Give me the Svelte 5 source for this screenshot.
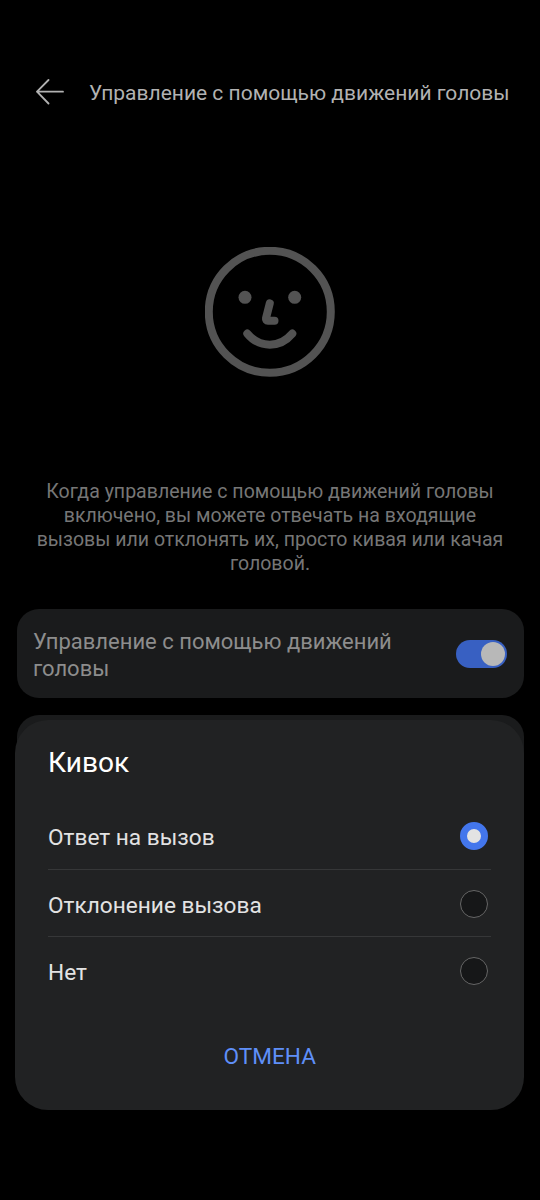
<script lang="ts">
    let enabled = $state(true);
    let isOpen = $state(true);
    let selected = $state("answer");

    const options = [
        { id: "answer", label: "Ответ на вызов" },
        { id: "decline", label: "Отклонение вызова" },
        { id: "none", label: "Нет" },
    ];

    function closeDialog() {
        isOpen = false;
    }
</script>

<div class="screen">
    <header class="app-bar">
        <button class="back-btn" aria-label="Назад">
            <svg
                viewBox="0 0 28 26"
                width="28"
                height="26"
                fill="none"
                stroke="currentColor"
                stroke-width="1.8"
                stroke-linecap="round"
                stroke-linejoin="round"
            >
                <path d="M12.5 1 L1 12.7 L12.5 24.5 M1 12.7 H27" />
            </svg>
        </button>
        <h1>Управление с помощью движений головы</h1>
    </header>

    <div class="illustration">
        <svg
            viewBox="0 0 130 130"
            width="130"
            height="130"
            fill="none"
            stroke="currentColor"
            stroke-width="8"
            stroke-linecap="round"
            stroke-linejoin="round"
        >
            <circle cx="64.8" cy="64.8" r="61" />
            <circle cx="40" cy="50.3" r="6.5" fill="currentColor" stroke="none" />
            <circle cx="89.7" cy="50.3" r="6.5" fill="currentColor" stroke="none" />
            <path d="M64.8 56.3 L61 71.2 Q60.6 73.8 63 73.8 H69.5" />
            <path d="M42.3 86.6 C54.5 101.3 75 101.3 87.3 86.6" />
        </svg>
    </div>

    <p class="description">
        Когда управление с помощью движений головы включено, вы можете отвечать
        на входящие вызовы или отклонять их, просто кивая или качая головой.
    </p>

    <section class="card">
        <span class="card-label">Управление с помощью движений головы</span>
        <button
            class="switch"
            class:on={enabled}
            role="switch"
            aria-checked={enabled}
            aria-label="Управление"
            onclick={() => (enabled = !enabled)}
        >
            <span class="thumb"></span>
        </button>
    </section>

    <section class="card next-card"></section>
</div>

{#if isOpen}
    <div class="dialog" role="dialog" aria-modal="true" aria-labelledby="dialog-title">
        <h2 id="dialog-title">Кивок</h2>
        <div class="options" role="radiogroup">
            {#each options as option (option.id)}
                <button
                    class="option"
                    role="radio"
                    aria-checked={selected === option.id}
                    onclick={() => (selected = option.id)}
                >
                    <span class="option-label">{option.label}</span>
                    <span class="radio" class:checked={selected === option.id}></span>
                </button>
            {/each}
        </div>
        <button class="cancel-btn" onclick={closeDialog}>ОТМЕНА</button>
    </div>
{/if}

<style>
    :global(body) {
        background: #000;
        font-family: Roboto, sans-serif;
    }

    button {
        padding: 0;
        border: none;
        background: none;
        color: inherit;
        font: inherit;
        cursor: pointer;
    }

    .screen {
        box-sizing: border-box;
        height: 1200px;
        padding: 62px 16.5px 0;
        overflow: hidden;
        background: #000;
    }

    .app-bar {
        display: flex;
        align-items: center;
        height: 60px;
        padding-left: 19.5px;
        color: #b2b2b2;
    }

    .back-btn {
        display: flex;
        margin-right: 25px;
    }

    h1 {
        margin: 0;
        padding-top: 1px;
        font-size: 21px;
        font-weight: 400;
        white-space: nowrap;
    }

    .illustration {
        display: flex;
        justify-content: center;
        margin-top: 125px;
        color: #535353;
    }

    .description {
        margin: 103px 16px 0;
        font-size: 19.55px;
        line-height: 24px;
        text-align: center;
        color: #767676;
    }

    .card {
        box-sizing: border-box;
        display: flex;
        align-items: center;
        justify-content: space-between;
        height: 89px;
        margin-top: 33px;
        padding: 0 16.5px;
        border-radius: 22px;
        background: #1a1b1c;
    }

    .card-label {
        width: 380px;
        padding-top: 3px;
        font-size: 22px;
        line-height: 27px;
        color: #8d8d8d;
    }

    .switch {
        box-sizing: border-box;
        display: flex;
        width: 51px;
        height: 28px;
        padding: 2px;
        border-radius: 14px;
        background: #444;
    }

    .switch.on {
        justify-content: flex-end;
        background: #3860c2;
    }

    .thumb {
        width: 24px;
        height: 24px;
        border-radius: 50%;
        background: #b8b8b8;
    }

    .next-card {
        margin-top: 17px;
    }

    .dialog {
        position: fixed;
        left: 15px;
        right: 15.6px;
        bottom: 90px;
        box-sizing: border-box;
        height: 389.6px;
        padding: 25px 33px 0;
        border-radius: 33px;
        background: #212223;
        display: flex;
        flex-direction: column;
    }

    h2 {
        margin: 0;
        font-size: 28.1px;
        font-weight: 400;
        line-height: 36px;
        color: #fff;
    }

    .options {
        margin-top: 20px;
    }

    .option {
        box-sizing: border-box;
        display: flex;
        align-items: center;
        justify-content: space-between;
        width: 100%;
        height: 67.5px;
        padding: 1px 3px 0 0;
        font-size: 22.65px;
        color: #e3e3e3;
    }

    .option + .option {
        border-top: 1px solid #363738;
    }

    .option-label {
        padding-top: 3px;
    }

    .radio {
        box-sizing: border-box;
        width: 28px;
        height: 28px;
        border: 1px solid #666;
        border-radius: 50%;
        background: #161718;
    }

    .radio.checked {
        border: 7px solid #4376ec;
        background: #e3e3e3;
    }

    .cancel-btn {
        align-self: center;
        margin-top: 38px;
        padding: 0 16px;
        font-size: 22.6px;
        line-height: 30px;
        color: #5f8ff8;
    }
</style>
